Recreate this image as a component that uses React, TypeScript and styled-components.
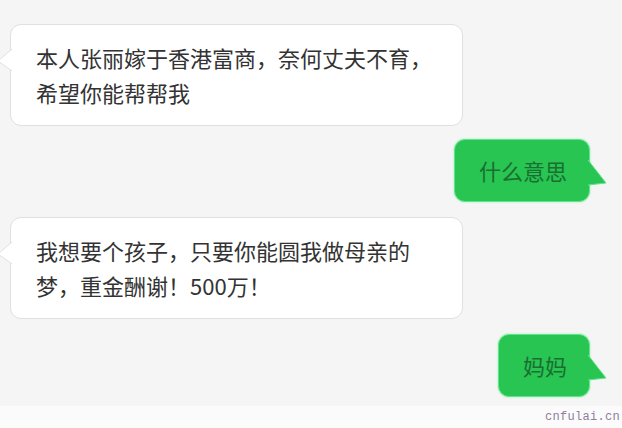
import React from "react";
import styled, { createGlobalStyle } from "styled-components";

const Global = createGlobalStyle`
  html, body { margin: 0; padding: 0; background: #f5f5f5; }
  body { width: 622px; height: 428px; overflow: hidden; }
`;

const Page = styled.div`
  width: 622px;
  height: 428px;
  background: #f5f5f5;
  display: flex;
  flex-direction: column;
  font-family: "Noto Sans CJK SC", "Noto Sans", sans-serif;
  overflow: hidden;
`;

const Thread = styled.div`
  flex: 1;
  display: flex;
  flex-direction: column;
  padding: 24px 32px 0 10px;
  gap: 13px;
`;

const Row = styled.div<{ $mine?: boolean; $gap?: number }>`
  display: flex;
  justify-content: ${(p) => (p.$mine ? "flex-end" : "flex-start")};
  margin-top: ${(p) => p.$gap ?? 0}px;
`;

const Bubble = styled.div<{ $mine?: boolean }>`
  position: relative;
  box-sizing: border-box;
  font-size: 22px;
  line-height: 35px;
  border-radius: 11px;
  ${(p) =>
    p.$mine
      ? `
    background: #28c552;
    color: #1b6e31;
    border: 1.5px solid #5fe58a;
    padding: 13px 22px 13px 24px;
    box-shadow: 0 0 2px rgba(80, 230, 120, 0.6);
  `
      : `
    background: #ffffff;
    color: #333333;
    border: 1px solid #e0e0e0;
    width: 453px;
    padding: 15px 20px 15px 25px;
  `}
`;

const TailSvg = styled.svg<{ $mine?: boolean }>`
  position: absolute;
  top: ${(p) => (p.$mine ? "20px" : "22px")};
  ${(p) => (p.$mine ? "right: -19px;" : "left: -13px;")}
  overflow: visible;
`;

const Footer = styled.div`
  height: 22px;
  background: #fbfbfb;
  display: flex;
  justify-content: flex-end;
  align-items: center;
  padding-right: 2px;
`;

const Watermark = styled.span`
  font-family: "Liberation Mono", "DejaVu Sans Mono", monospace;
  font-size: 12px;
  color: #8f7f9f;
  letter-spacing: 0.3px;
`;

const LeftTail = () => (
  <TailSvg width="14" height="26" viewBox="0 0 14 26">
    <polygon points="14,2 0,14 14,24" fill="#ffffff" />
    <polyline points="14,2 0,14 14,24" fill="none" stroke="#e0e0e0" strokeWidth="1" />
  </TailSvg>
);

const RightTail = () => (
  <TailSvg $mine width="20" height="26" viewBox="0 0 20 26">
    <polygon points="0,0 18,23 0,25" fill="#28c552" />
    <polyline points="0,0 18,23 0,25" fill="none" stroke="#5fe58a" strokeWidth="1" />
  </TailSvg>
);

export default function App() {
  return (
    <>
      <Global />
      <Page>
        <Thread>
          <Row>
            <Bubble>
              <LeftTail />
              本人张丽嫁于香港富商，奈何丈夫不育，
              <br />
              希望你能帮帮我
            </Bubble>
          </Row>
          <Row $mine>
            <Bubble $mine>
              什么意思
              <RightTail />
            </Bubble>
          </Row>
          <Row $gap={2}>
            <Bubble>
              <LeftTail />
              我想要个孩子，只要你能圆我做母亲的
              <br />
              梦，重金酬谢！500万！
            </Bubble>
          </Row>
          <Row $mine $gap={2}>
            <Bubble $mine>
              妈妈
              <RightTail />
            </Bubble>
          </Row>
        </Thread>
        <Footer>
          <Watermark>cnfulai.cn</Watermark>
        </Footer>
      </Page>
    </>
  );
}
